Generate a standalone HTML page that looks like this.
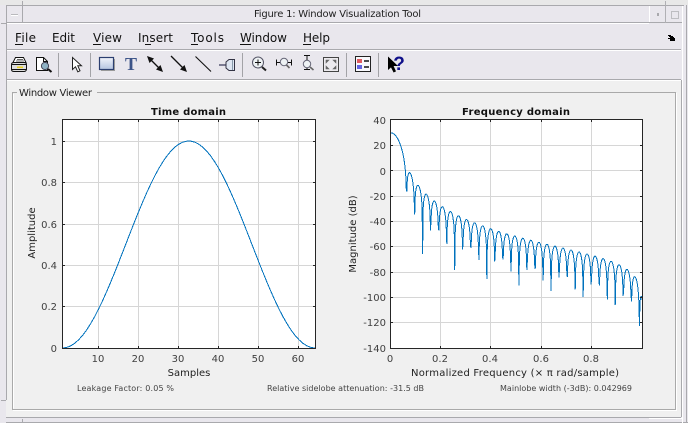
<!DOCTYPE html>
<html><head><meta charset="utf-8"><style>
html,body{margin:0;padding:0;background:#e9e7ed;width:688px;height:423px;overflow:hidden}
svg{display:block;position:absolute;left:0;top:0}
text{font-family:"DejaVu Sans","Liberation Sans",sans-serif}
.t{font-size:10px;fill:#404040}
.m{font-size:12px;fill:#111}
.b{font-size:8px;fill:#444}
.h{font-size:10px;font-weight:bold;fill:#111}
</style></head><body>
<svg width="688" height="423" viewBox="0 0 688 423" xmlns="http://www.w3.org/2000/svg">
<!-- window chrome -->
<rect width="688" height="423" fill="#e9e7ed"/>
<rect x="0" y="0" width="688" height="5" fill="#e8e8e8"/>
<rect x="6" y="80" width="675" height="337" fill="#f0f0f0"/>
<g fill="none" stroke="#a9a9ad" stroke-width="1">
<path d="M6 5.5H684M6.5 5V400M1 400.5H6M1 23.5H6M6 22.5H682M22.5 1V23M6 49.5H681M6 79.5H681M6 422.5H688M22.5 419V423M6 417.5H681M681.5 80V417M686.5 5V423"/>
</g>
<path d="M7 50.5H681M7 80.5H681M7 23.5H649M649.5 6V22M665.5 6V22M682.5 6V423M649 418.5H682" stroke="#fff" fill="none"/>
<path d="M665.5 1V23" stroke="#b0b0b4" fill="none"/>
<path d="M649.5 6V22" stroke="#fff" fill="none"/>
<path d="M11 14.5H18" stroke="#b9b9bd"/><path d="M11 15.5H18" stroke="#fff"/>
<rect x="657" y="13" width="2" height="3" fill="#a9a9ad"/>
<rect x="671.5" y="11.5" width="7" height="7" fill="none" stroke="#bdbdc1"/>
<text x="337.5" y="17" text-anchor="middle" fill="#222" textLength="167" lengthAdjust="spacing" style="font-size:10px">Figure 1: Window Visualization Tool</text>
<!-- menu -->
<text class="m" x="15" y="42" textLength="21">File</text><path d="M15 44.5H23" stroke="#111"/>
<text class="m" x="52" y="42" textLength="23">Edit</text>
<text class="m" x="93" y="42" textLength="29">View</text><path d="M93 44.5H101" stroke="#111"/>
<text class="m" x="138" y="42" textLength="35">Insert</text><path d="M145 44.5H151" stroke="#111"/>
<text class="m" x="191" y="42" textLength="33">Tools</text><path d="M191 44.5H198" stroke="#111"/>
<text class="m" x="240" y="42" textLength="47">Window</text><path d="M240 44.5H251" stroke="#111"/>
<text class="m" x="303" y="42" textLength="27">Help</text><path d="M303 44.5H311" stroke="#111"/>
<path d="M668 35h3v1h2v1h1v1h1v3h-5v-2h-2v-1h2v-1h-1v-1h-1z" fill="#000"/>
<!-- toolbar separators -->
<path d="M58.5 53V77M90.5 53V77M242.5 53V77M346.5 53V77M378.5 53V77" stroke="#a3a3a7"/>
<!-- printer -->
<g stroke="#111" fill="none">
<path d="M15.5 57.5H23.5L26 62.5H13Z" fill="#fff"/>
<path d="M17 59.5H23M16 61H24" stroke="#666"/>
<path d="M11.5 64.5Q11.5 62.5 14 62.5H24Q26.5 62.5 26.5 64.5V69.5Q26 71.5 24 71.5H14Q11.5 71.5 11.5 69.5Z" fill="#ddd"/>
<path d="M12 64.5H26M12 69.5H26"/>
<path d="M17 67.3H23" stroke="#e8d020" stroke-width="1.6"/>
</g>
<!-- preview -->
<path d="M36.5 57.5H43.5L47.5 61.5V70.5H36.5Z" fill="#fff" stroke="#111"/>
<path d="M43.5 57.5V61.5H47.5" fill="none" stroke="#111"/>
<circle cx="45" cy="66" r="3.6" fill="#8fb2c4" stroke="#445"/>
<path d="M48 69L51.5 72" stroke="#111" stroke-width="2"/>
<!-- cursor -->
<path d="M72.5 57.5V69.5L75.5 66.8L77.8 71.8L80 70.8L77.8 65.8H81.5Z" fill="#fff" stroke="#222"/>
<!-- rectangle -->
<defs><linearGradient id="g" x1="0" y1="0" x2="0" y2="1"><stop offset="0" stop-color="#f2f4fa"/><stop offset="1" stop-color="#b4c4e0"/></linearGradient></defs>
<rect x="99.5" y="57.5" width="14" height="12" fill="url(#g)" stroke="#2c3f70" stroke-width="1.2"/>
<path d="M101 70.5H114.5V59" stroke="#999" fill="none"/>
<!-- T -->
<text x="131" y="70" text-anchor="middle" style="font-family:'Liberation Serif',serif;font-size:18px;font-weight:bold" fill="#3c5488">T</text>
<!-- double arrow -->
<path d="M150 59L160 69" stroke="#111" stroke-width="1.3"/>
<path d="M147 56L154 58.5L149.5 63Z" fill="#111"/><path d="M163 72L156 69.5L160.5 65Z" fill="#111"/>
<!-- arrow -->
<path d="M171 56L184 69" stroke="#111" stroke-width="1.3"/>
<path d="M187 72L180 69.5L184.5 65Z" fill="#111"/>
<!-- line -->
<path d="M195.5 56.5L211 71.5" stroke="#111" stroke-width="1.1"/>
<!-- pin -->
<path d="M219 65H226" stroke="#335" stroke-width="1.2"/>
<path d="M226 62L229 59.5H234.5V70.5H229L226 68Z" fill="#dfe6f2" stroke="#334" />
<path d="M232.5 60V70" stroke="#89a" />
<!-- zoom in -->
<circle cx="258" cy="62.5" r="5.5" fill="#eef2f4" stroke="#556"/>
<path d="M255 62.5H261M258 59.5V65.5" stroke="#111"/>
<path d="M262 67L266 70.5" stroke="#222" stroke-width="2"/>
<!-- zoom x -->
<circle cx="284" cy="62" r="3.7" fill="#eef2f4" stroke="#667"/>
<path d="M276.5 59.5V65.5M291.5 59.5V65.5M277 62.5H280M288 62.5H291" stroke="#111"/>
<path d="M286.5 65L289.5 68" stroke="#666" stroke-width="1.6"/>
<!-- zoom y -->
<circle cx="307" cy="64" r="3.7" fill="#eef2f4" stroke="#667"/>
<path d="M304 55.5H310M304 69.5H310M307 56V60M307 68V69.5" stroke="#111"/>
<path d="M310 67L313.5 70" stroke="#666" stroke-width="1.6"/>
<!-- fit -->
<rect x="323.5" y="57.5" width="15" height="14" fill="#eceaee" stroke="#444"/>
<path d="M326 60H329L326 63ZM336 60H333L336 63ZM326 69H329L326 66ZM336 69H333L336 66Z" fill="#666" stroke="#666" stroke-width=".6"/>
<!-- legend -->
<rect x="355.5" y="56.5" width="15" height="15" fill="#f8f8fc" stroke="#222"/>
<rect x="357" y="59" width="5" height="4" fill="#e05a60"/>
<rect x="357" y="65" width="5" height="4" fill="#6464e0"/>
<path d="M364 61H369M364 67H369" stroke="#111" stroke-width="1.4"/>
<!-- help -->
<path d="M388 56.5V70L391 67.4L393.6 72.5L396 71.4L393.6 66H398Z" fill="#000"/>
<text x="399" y="70" text-anchor="middle" style="font-family:'Liberation Sans',sans-serif;font-size:19px;font-weight:bold" fill="#10108a">?</text>
<!-- panel -->
<path d="M12.5 93V409.5H675.5V92.5H97" fill="none" stroke="#a9a9a9"/>
<path d="M12 92.5H17" stroke="#a9a9a9"/>
<path d="M13.5 94V408.5M13 410.5H676.5V93" fill="none" stroke="#fff"/>
<text x="19" y="96" style="font-size:10px" fill="#222" textLength="73">Window Viewer</text>
<rect x="62" y="120" width="253" height="228" fill="#fff"/>
<rect x="390" y="120" width="252" height="228" fill="#fff"/>
<!-- grid -->
<path d="M98.5 120V348M138.5 120V348M178.5 120V348M218.5 120V348M258.5 120V348M298.5 120V348M62 141.5H315M62 182.5H315M62 224.5H315M62 265.5H315M62 306.5H315" stroke="#d6d6d6" fill="none"/>
<path d="M440.5 120V348M490.5 120V348M541.5 120V348M591.5 120V348M390 145.5H642M390 170.5H642M390 196.5H642M390 221.5H642M390 246.5H642M390 272.5H642M390 297.5H642M390 322.5H642" stroke="#d6d6d6" fill="none"/>
<!-- curves -->
<path id="c1" d="" fill="none" stroke="#0072bd" stroke-width="1" shape-rendering="crispEdges"/>
<clipPath id="cp"><rect x="390" y="120" width="252" height="228"/></clipPath>
<path id="c2" d="" fill="none" stroke="#0072bd" stroke-width="1" clip-path="url(#cp)" shape-rendering="crispEdges"/>
<!-- axes -->
<path d="M62.5 120V348.5H315.5V119.5H62" fill="none" stroke="#262626"/>
<path d="M390.5 120V348.5H642.5V119.5H390" fill="none" stroke="#262626"/>
<path d="M98.5 120v2M138.5 120v2M178.5 120v2M218.5 120v2M258.5 120v2M298.5 120v2M98.5 348v-2M138.5 348v-2M178.5 348v-2M218.5 348v-2M258.5 348v-2M298.5 348v-2M63 141.5h2M63 182.5h2M63 224.5h2M63 265.5h2M63 306.5h2M315 141.5h-2M315 182.5h-2M315 224.5h-2M315 265.5h-2M315 306.5h-2" stroke="#262626"/>
<path d="M440.5 120v2M490.5 120v2M541.5 120v2M591.5 120v2M440.5 348v-2M490.5 348v-2M541.5 348v-2M591.5 348v-2M391 145.5h2M391 170.5h2M391 196.5h2M391 221.5h2M391 246.5h2M391 272.5h2M391 297.5h2M391 322.5h2M642 145.5h-2M642 170.5h-2M642 196.5h-2M642 221.5h-2M642 246.5h-2M642 272.5h-2M642 297.5h-2M642 322.5h-2" stroke="#262626"/>
<!-- left labels -->
<text class="h" x="188.5" y="115" text-anchor="middle" textLength="75">Time domain</text>
<g text-anchor="end">
<text class="t" x="57" y="145">1</text><text class="t" x="57" y="186">0.8</text><text class="t" x="57" y="228">0.6</text><text class="t" x="57" y="269">0.4</text><text class="t" x="57" y="310">0.2</text><text class="t" x="57" y="352">0</text>
</g>
<g text-anchor="middle">
<text class="t" x="98" y="362">10</text><text class="t" x="138" y="362">20</text><text class="t" x="178" y="362">30</text><text class="t" x="218" y="362">40</text><text class="t" x="258" y="362">50</text><text class="t" x="298" y="362">60</text>
<text class="t" x="189" y="376" style="fill:#222">Samples</text>
<text class="t" transform="translate(35 233) rotate(-90)" style="fill:#222">Amplitude</text>
</g>
<!-- right labels -->
<text class="h" x="516" y="115" text-anchor="middle" textLength="108">Frequency domain</text>
<g text-anchor="end">
<text class="t" x="386" y="124">40</text><text class="t" x="386" y="149">20</text><text class="t" x="386" y="175">0</text><text class="t" x="386" y="200">-20</text><text class="t" x="386" y="225">-40</text><text class="t" x="386" y="250">-60</text><text class="t" x="386" y="276">-80</text><text class="t" x="386" y="301">-100</text><text class="t" x="386" y="326">-120</text><text class="t" x="386" y="352">-140</text>
</g>
<g text-anchor="middle">
<text class="t" x="390" y="362">0</text><text class="t" x="440" y="362">0.2</text><text class="t" x="490" y="362">0.4</text><text class="t" x="541" y="362">0.6</text><text class="t" x="591" y="362">0.8</text>
<text class="t" x="515" y="376" textLength="208" style="fill:#222">Normalized Frequency  (× π rad/sample)</text>
<text class="t" transform="translate(356 234) rotate(-90)" style="fill:#222">Magnitude (dB)</text>
</g>
<text class="b" x="77" y="391" textLength="97">Leakage Factor: 0.05 %</text>
<text class="b" x="267" y="391" textLength="157">Relative sidelobe attenuation: -31.5 dB</text>
<text class="b" x="500" y="391" textLength="132">Mainlobe width (-3dB): 0.042969</text>
</svg>
<script>
(function(){
var L=64,N=1024,w=[],i,k,d='';
for(i=0;i<L;i++)w.push(.5-.5*Math.cos(2*Math.PI*i/(L-1)));
for(i=0;i<L;i++){d+=(i?'L':'M')+(62.5+i*4.01).toFixed(2)+' '+(348-w[i]*207).toFixed(2);}
document.getElementById('c1').setAttribute('d',d);
d='';
for(k=0;k<N/2;k++){var re=0,im=0;for(i=0;i<L;i++){var a=2*Math.PI*i*k/N;re+=w[i]*Math.cos(a);im-=w[i]*Math.sin(a);}
var db=10*Math.log10(re*re+im*im+1e-20);
d+=(k?'L':'M')+(390.5+k*(2/N)*252.9).toFixed(2)+' '+(120+(40-db)*228/180).toFixed(2);}
document.getElementById('c2').setAttribute('d',d);
})();
</script>
</body></html>
